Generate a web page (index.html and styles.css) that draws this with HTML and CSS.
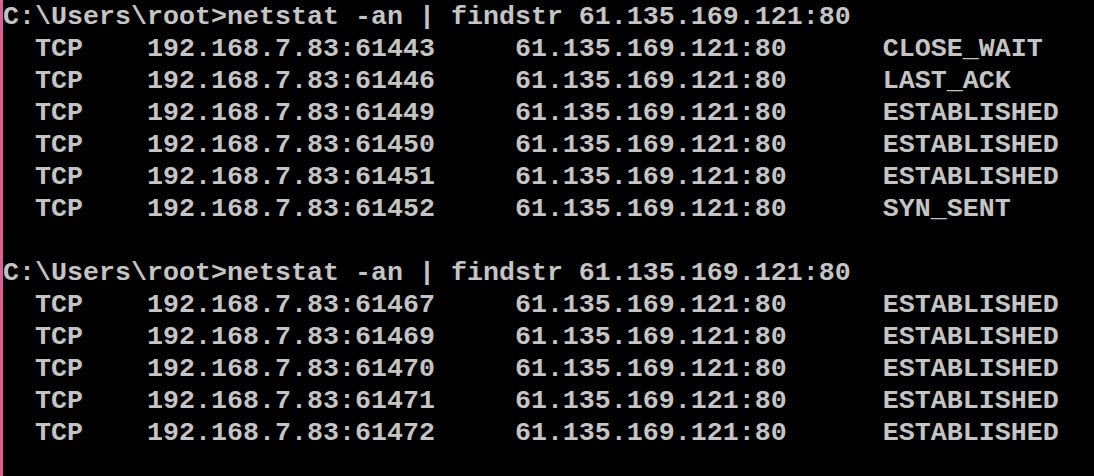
FILE: index.html
```html
<!DOCTYPE html>
<html>
<head>
<meta charset="utf-8">
<link rel="stylesheet" href="styles.css">
</head>
<body>
<div class="console">
<pre class="output">C:\Users\root&gt;netstat -an | findstr 61.135.169.121:80
  TCP    192.168.7.83:61443     61.135.169.121:80      CLOSE_WAIT
  TCP    192.168.7.83:61446     61.135.169.121:80      LAST_ACK
  TCP    192.168.7.83:61449     61.135.169.121:80      ESTABLISHED
  TCP    192.168.7.83:61450     61.135.169.121:80      ESTABLISHED
  TCP    192.168.7.83:61451     61.135.169.121:80      ESTABLISHED
  TCP    192.168.7.83:61452     61.135.169.121:80      SYN_SENT

C:\Users\root&gt;netstat -an | findstr 61.135.169.121:80
  TCP    192.168.7.83:61467     61.135.169.121:80      ESTABLISHED
  TCP    192.168.7.83:61469     61.135.169.121:80      ESTABLISHED
  TCP    192.168.7.83:61470     61.135.169.121:80      ESTABLISHED
  TCP    192.168.7.83:61471     61.135.169.121:80      ESTABLISHED
  TCP    192.168.7.83:61472     61.135.169.121:80      ESTABLISHED</pre>
</div>
</body>
</html>
```
FILE: styles.css
```css
html, body {
  margin: 0;
  padding: 0;
  background: #000;
}
.console {
  width: 1094px;
  height: 476px;
  box-sizing: border-box;
  border-left: 3px solid #de5f90;
  background: #000;
  overflow: hidden;
}
.output {
  margin: 0;
  padding-top: 1px;
  font-family: "Liberation Mono", "DejaVu Sans Mono", monospace;
  font-weight: bold;
  font-size: 26.67px;
  line-height: 32px;
  color: #c4c4c4;
  white-space: pre;
}
```
